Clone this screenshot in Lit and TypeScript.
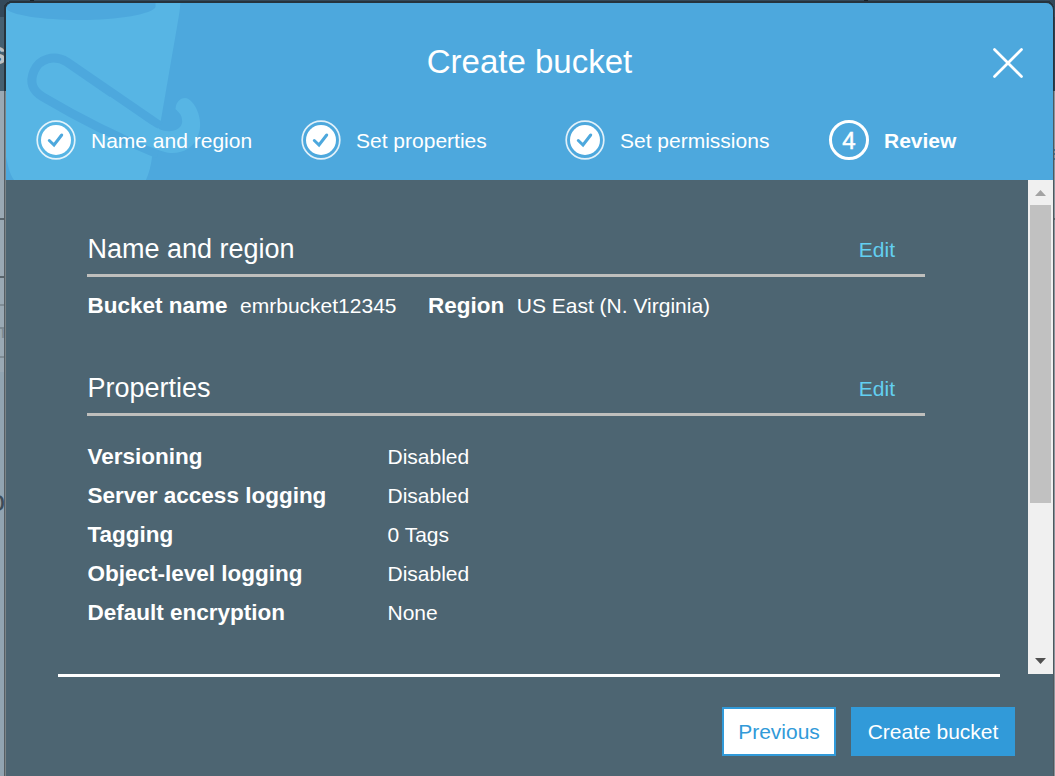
import { LitElement, html, css, svg } from "lit";
import { customElement } from "lit/decorators.js";

const steps = ["Name and region", "Set properties", "Set permissions"];

const properties = [
  ["Versioning", "Disabled"],
  ["Server access logging", "Disabled"],
  ["Tagging", "0 Tags"],
  ["Object-level logging", "Disabled"],
  ["Default encryption", "None"],
];

@customElement("app-root")
export class AppRoot extends LitElement {
  static styles = css`
    :host {
      display: block;
      position: relative;
      width: 1055px;
      height: 776px;
      overflow: hidden;
      font-family: "Liberation Sans", Arial, sans-serif;
      font-size: 21px;
      color: #fff;
    }
    * { box-sizing: border-box; }
    .page { position: absolute; inset: 0; display: block; }
    .dialog {
      position: relative;
      display: flex;
      flex-direction: column;
      height: 773px;
      margin: 3px 2px 0 6px;
      border-radius: 7px 7px 0 0;
      overflow: hidden;
      background: #4d6572;
    }
    header {
      position: relative;
      flex: none;
      height: 177px;
      background: #4da8dd;
    }
    .art { position: absolute; left: 0; top: 0; display: block; }
    .titlebar {
      position: relative;
      height: 117px;
      display: flex;
      align-items: center;
      justify-content: center;
    }
    h1 { margin: 0; font-size: 33px; font-weight: 400; line-height: 38px; }
    .close { position: absolute; right: 30px; top: 45px; }
    .steps {
      position: relative;
      display: grid;
      grid-template-columns: 265px 264px 264px 1fr;
      padding-left: 30px;
      height: 40px;
    }
    .step { display: flex; align-items: center; gap: 15px; line-height: 24px; }
    .step svg { flex: none; }
    .label { padding-top: 2px; }
    .current { font-weight: 700; }
    .number {
      width: 40px; height: 40px;
      border: 3px solid #fff;
      border-radius: 50%;
      display: flex; align-items: center; justify-content: center;
      font-size: 24px;
      font-weight: 400;
      -webkit-text-stroke: 0.5px #fff;
      padding-top: 1px;
    }
    .middle { flex: none; display: flex; height: 494px; }
    .content { flex: 1; padding: 53px 103px 0 81px; }
    .head {
      display: flex;
      align-items: center;
      justify-content: space-between;
      height: 44px;
      padding: 0 30px 10px 0;
      border-bottom: 3px solid #bfbfbd;
    }
    h2 { margin: 0; padding: 1px 0 0 0.5px; font-size: 27px; font-weight: 400; line-height: 31px; }
    .edit { color: #63cff1; line-height: 24px; padding-top: 2px; }
    b { font-size: 22.5px; line-height: 26px; padding-left: 0.5px; }
    .summary { display: flex; align-items: center; height: 56px; margin-bottom: 39px; }
    .summary b { padding-top: 1px; }
    .summary span { margin-left: 12.5px; padding-top: 1px; }
    .summary .second { margin-left: 31px; }
    .list { padding-top: 21px; }
    .row { display: grid; grid-template-columns: 300px 1fr; align-items: center; height: 39px; }
    .row span { padding: 1px 0 0 0.5px; }
    .bar {
      width: 25px;
      display: flex;
      flex-direction: column;
      align-items: center;
      background: #f0f0f0;
    }
    .bar svg { flex: none; display: block; }
    .thumb { width: 21px; height: 298px; background: #c1c1c1; margin-bottom: auto; }
    footer {
      flex: 1;
      margin: 0 53px 0 52px;
      border-top: 3px solid #fff;
      padding-top: 30px;
      display: flex;
      justify-content: flex-end;
      align-items: flex-start;
      gap: 15px;
    }
    button {
      height: 49px;
      padding: 0;
      border: 2px solid #319ad9;
      font: inherit;
      border-radius: 0;
    }
    .previous { width: 114px; background: #fff; color: #319ad9; }
    .create { width: 164px; background: #319ad9; color: #fff; margin-right: -15px; }
  `;

  private page() {
    return svg`
      <svg class="page" width="1055" height="776" viewBox="0 0 1055 776" shape-rendering="crispEdges">
        <rect width="1055" height="776" fill="#9aa9b4"/>
        <rect width="1055" height="17" fill="#34495a"/>
        <rect y="17" width="1055" height="74" fill="#466071"/>
        <rect y="372" width="6" height="404" fill="#91a4b1"/>
        <path d="M0 219H6M0 277H6" stroke="#59656d" stroke-width="2"/>
        <path d="M0 305H6M0 328H6M0 357H6" stroke="#7f8c95" stroke-width="2"/>
        <text x="-11" y="64" font-size="31" font-weight="700" fill="#b9c0c6">s</text>
        <text x="-6" y="338" font-size="20" fill="#7b8992">n</text>
        <text x="-11" y="511" font-size="29" fill="#3d4c58">o</text>
        <rect x="1052" y="91" width="3" height="685" fill="#89949c"/>
        <rect x="1052" y="17" width="3" height="74" fill="#2d3f4d"/>
        <path d="M1053 150H1055M1053 154H1055M1053 159H1055" stroke="#456e8b" stroke-width="1.500"/>
        <path d="M1053 219H1055" stroke="#59656d" stroke-width="2"/>
        <path d="M5 91V9Q5 2 12 2H1046Q1053 2 1053 9V91" fill="none" stroke="#26333d" stroke-width="2"/>
        <path d="M4.500 91V776" stroke="#555e64"/>
        <path d="M5.500 91V776" stroke="#7c8487"/>
        <path d="M1053.500 91V776" stroke="#4d585e"/>
        <path d="M30 0.500H34M864 0.500H868" stroke="#17222a"/>
      </svg>`;
  }

  private art() {
    return svg`
      <svg class="art" width="210" height="177" viewBox="6 3 210 177">
        <path d="M6 3H180.300C180 10 179 15 178 21L161 119.500L152 157C151 166 149 173 146 180H14C9 173 8 165 6 157Z" fill="#57b5e4"/>
        <path d="M6 3H155.500V7C153 14 118 20 79 20C44 20 8 15 6 8Z" fill="#4da8dd"/>
        <path d="M160 126L67 62C54 54 39 59 34 71C29 83 33 91 43 97C80 119 118 138 158 154" fill="none" stroke="#4da8dd" stroke-width="9"/>
        <path d="M110 96.500L150 124C158 129 164 132 171 131C180 130 183 124 182 120C182 114 178 112 175.500 109C176 102 180 98 185 98C190 98 195 105 197 110C201 119 201 129 198 136C194 147 183 154 170 153C160 152 140 143 110 127Z" fill="#57b5e4"/>
      </svg>`;
  }

  private check() {
    return svg`
      <svg width="40" height="40" viewBox="0 0 40 40">
        <circle cx="20" cy="20" r="18.800" fill="none" stroke="#fff" stroke-opacity=".83" stroke-width="1.700"/>
        <circle cx="20" cy="20" r="15" fill="#fff"/>
        <path d="M13.300 20.500L18 25L25.700 15" fill="none" stroke="#4da8dd" stroke-width="3" stroke-linecap="round"/>
      </svg>`;
  }

  private heading(title: string) {
    return html`<div class="head"><h2>${title}</h2><span class="edit">Edit</span></div>`;
  }

  render() {
    return html`
      ${this.page()}
      <div class="dialog">
        <header>
          ${this.art()}
          <div class="titlebar">
            <h1>Create bucket</h1>
            <svg class="close" width="30" height="30" viewBox="0 0 30 30">
              <path d="M1.500 1.500L28.500 28.500M28.500 1.500L1.500 28.500" stroke="#fff" stroke-width="2.700" stroke-linecap="round"/>
            </svg>
          </div>
          <div class="steps">
            ${steps.map((s) => html`<div class="step">${this.check()}<span class="label">${s}</span></div>`)}
            <div class="step current"><span class="number">4</span><span class="label">Review</span></div>
          </div>
        </header>
        <div class="middle">
          <div class="content">
            ${this.heading("Name and region")}
            <div class="summary">
              <b>Bucket name</b><span>emrbucket12345</span>
              <b class="second">Region</b><span>US East (N. Virginia)</span>
            </div>
            ${this.heading("Properties")}
            <div class="list">
              ${properties.map(([k, v]) => html`<div class="row"><b>${k}</b><span>${v}</span></div>`)}
            </div>
          </div>
          <div class="bar">
            <svg width="25" height="25"><path d="M7 16L12.500 10L18 16Z" fill="#a3a3a3"/></svg>
            <div class="thumb"></div>
            <svg width="25" height="25"><path d="M7 9L12.500 15L18 9Z" fill="#505050"/></svg>
          </div>
        </div>
        <footer>
          <button class="previous">Previous</button>
          <button class="create">Create bucket</button>
        </footer>
      </div>
    `;
  }
}
